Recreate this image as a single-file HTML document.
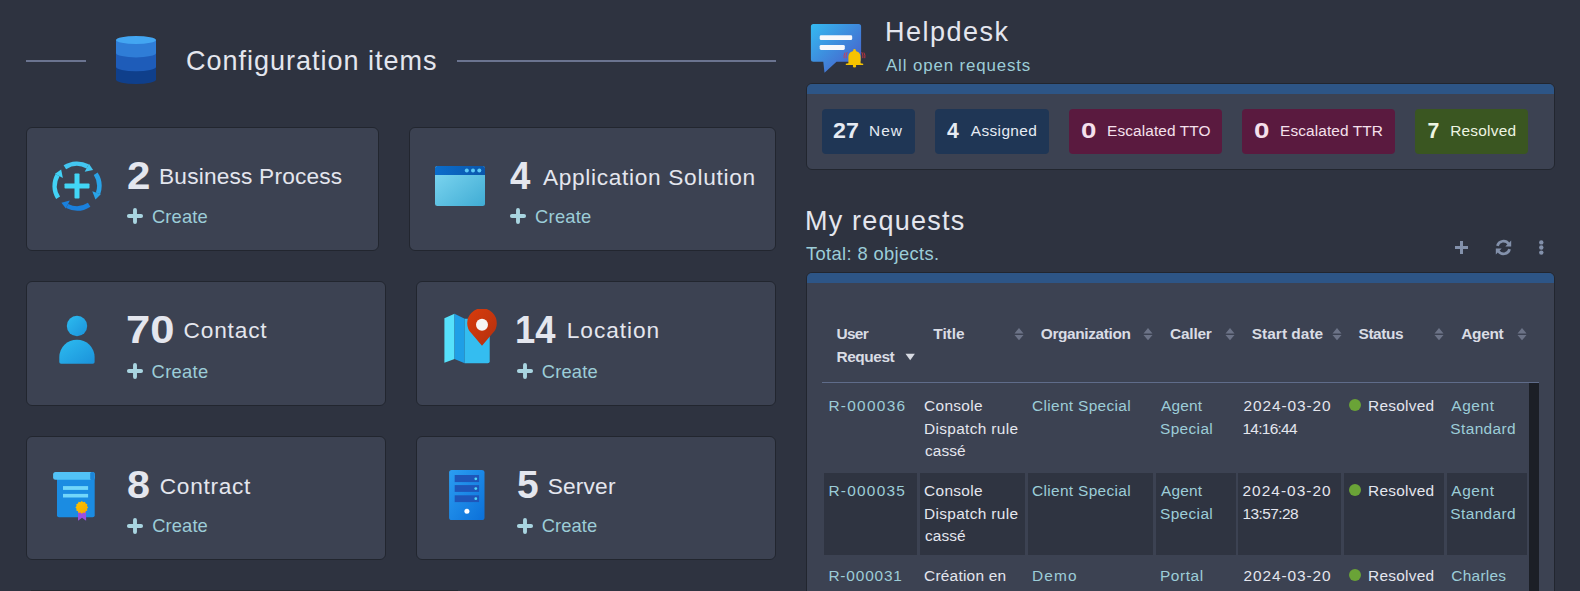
<!DOCTYPE html>
<html><head><meta charset="utf-8"><style>
html,body{margin:0;padding:0;width:1580px;height:591px;overflow:hidden;background:#2e3340;}
body{position:relative;font-family:"Liberation Sans",sans-serif;}
.t{position:absolute;white-space:nowrap;line-height:1;}
.hl{position:absolute;height:2px;background:#6b7490;}
.card{position:absolute;box-sizing:border-box;background:#3c4252;border:1px solid #22262f;border-radius:6px;}
.panel{position:absolute;box-sizing:border-box;background:#3c4252;border:1px solid #22262f;border-radius:6px;overflow:hidden;}
.strip{position:absolute;left:0;top:0;right:0;height:10px;background:#2d5586;}
.badge{position:absolute;top:109px;height:45px;border-radius:4px;}
.ic{position:absolute;}
</style></head><body>
<div class="hl" style="left:26px;top:60px;width:60px"></div>
<div class="hl" style="left:457px;top:60px;width:319px"></div>
<div class="card" style="left:26px;top:127px;width:353px;height:124px"></div>
<div class="card" style="left:409px;top:127px;width:367px;height:124px"></div>
<div class="card" style="left:26px;top:281px;width:360px;height:125px"></div>
<div class="card" style="left:416px;top:281px;width:360px;height:125px"></div>
<div class="card" style="left:26px;top:436px;width:360px;height:124px"></div>
<div class="card" style="left:416px;top:436px;width:360px;height:124px"></div>
<div class="panel" style="left:806px;top:83px;width:749px;height:87px"><div class="strip"></div></div>
<div class="badge" style="left:822px;width:93px;background:#1f3655"></div>
<div class="badge" style="left:935px;width:114px;background:#1f3655"></div>
<div class="badge" style="left:1069px;width:153px;background:#5a1a3f"></div>
<div class="badge" style="left:1242px;width:153px;background:#5a1a3f"></div>
<div class="badge" style="left:1415px;width:113px;background:#3a5621"></div>
<div class="panel" style="left:806px;top:272px;width:749px;height:340px"><div class="strip"></div></div>
<div style="position:absolute;left:822px;top:382px;width:717px;height:1px;background:#5f6c8a"></div>
<div style="position:absolute;left:1529px;top:383px;width:10px;height:208px;background:#1c1f26"></div>
<div style="position:absolute;left:31px;top:590px;width:427px;height:1px;background:#252931"></div>
<div style="position:absolute;left:824px;top:473px;width:93px;height:82px;background:#2f3441"></div>
<div style="position:absolute;left:920px;top:473px;width:105px;height:82px;background:#2f3441"></div>
<div style="position:absolute;left:1028px;top:473px;width:125px;height:82px;background:#2f3441"></div>
<div style="position:absolute;left:1156px;top:473px;width:80px;height:82px;background:#2f3441"></div>
<div style="position:absolute;left:1238px;top:473px;width:103px;height:82px;background:#2f3441"></div>
<div style="position:absolute;left:1344px;top:473px;width:100px;height:82px;background:#2f3441"></div>
<div style="position:absolute;left:1447px;top:473px;width:80px;height:82px;background:#2f3441"></div>
<div style="position:absolute;left:1349px;top:399px;width:12px;height:12px;border-radius:50%;background:#6aa337"></div>
<div style="position:absolute;left:1349px;top:484px;width:12px;height:12px;border-radius:50%;background:#6aa337"></div>
<div style="position:absolute;left:1349px;top:569px;width:12px;height:12px;border-radius:50%;background:#6aa337"></div>
<svg class="ic" style="left:116px;top:36px" width="40" height="48" viewBox="0 0 40 48">
<path d="M0,4 L0,43.6 A20,4.4 0 0 0 40,43.6 L40,4 Z" fill="#0f3f8b"/>
<path d="M0,4 L0,31 A20,4.2 0 0 0 40,31 L40,4 Z" fill="#1e5cb9"/>
<path d="M0,4 L0,17 A20,4.4 0 0 0 40,17 L40,4 Z" fill="#2f7dd7"/>
<ellipse cx="20" cy="4" rx="20" ry="4" fill="#43a6f2"/>
</svg>
<svg class="ic" style="left:50px;top:159px" width="54" height="54" viewBox="0 0 54 54"><path d="M14.85,8.30 A22.3,22.3 0 0 1 37.57,7.37" stroke="#43c6f1" stroke-width="4.6" fill="none"/><path d="M43.12,10.88 L38.95,4.81 L34.68,12.74 Z" fill="#43c6f1"/><path d="M45.70,14.85 A22.3,22.3 0 0 1 48.05,34.37" stroke="#2aa3e7" stroke-width="4.6" fill="none"/><path d="M45.45,40.40 L50.78,35.33 L42.29,32.35 Z" fill="#2aa3e7"/><path d="M39.15,45.70 A22.3,22.3 0 0 1 17.12,46.99" stroke="#1a80dd" stroke-width="4.6" fill="none"/><path d="M11.45,43.67 L15.83,49.59 L19.82,41.52 Z" fill="#1a80dd"/><path d="M8.09,38.82 A22.3,22.3 0 0 1 7.55,16.09" stroke="#42d2f6" stroke-width="4.6" fill="none"/><path d="M11.16,10.60 L5.02,14.67 L12.87,19.07 Z" fill="#42d2f6"/><rect x="14.5" y="24.5" width="25" height="5" rx="0.8" fill="#42d6f6"/><rect x="24.5" y="14.5" width="5" height="25" rx="0.8" fill="#42d6f6"/></svg>
<svg class="ic" style="left:435px;top:166px" width="50" height="40" viewBox="0 0 50 40">
<defs><linearGradient id="gw" x1="0" y1="0" x2="1" y2="1"><stop offset="0" stop-color="#80d8f2"/><stop offset="1" stop-color="#40acd4"/></linearGradient>
<linearGradient id="gb" x1="0" y1="0" x2="1" y2="0"><stop offset="0" stop-color="#0b6dcb"/><stop offset="1" stop-color="#0a56ab"/></linearGradient></defs>
<rect x="0" y="0" width="50" height="40" rx="2.5" fill="url(#gw)"/>
<path d="M0,9 L0,2.5 A2.5,2.5 0 0 1 2.5,0 L47.5,0 A2.5,2.5 0 0 1 50,2.5 L50,9 Z" fill="url(#gb)"/>
<circle cx="31.8" cy="4.4" r="2" fill="#5cc8f6"/><circle cx="38" cy="4.4" r="2" fill="#5cc8f6"/><circle cx="44.3" cy="4.4" r="2" fill="#5cc8f6"/>
</svg>
<svg class="ic" style="left:59px;top:315px" width="36" height="50" viewBox="0 0 36 50">
<defs><linearGradient id="gp" x1="0" y1="0" x2="1" y2="1"><stop offset="0" stop-color="#2dbcf0"/><stop offset="1" stop-color="#1b92da"/></linearGradient></defs>
<circle cx="18" cy="11" r="10.2" fill="url(#gp)"/>
<path d="M0.3,42 A17.65,17.2 0 0 1 35.6,42 L35.6,47 Q35.6,48.8 33.8,48.8 L2.1,48.8 Q0.3,48.8 0.3,47 Z" fill="url(#gp)"/>
</svg>
<svg class="ic" style="left:443px;top:309px" width="58" height="56" viewBox="0 0 58 56">
<defs><linearGradient id="gpin" x1="0" y1="0" x2="1" y2="1"><stop offset="0" stop-color="#d93c0c"/><stop offset="1" stop-color="#b3300f"/></linearGradient></defs>
<path d="M1.4,9.2 L11.5,4.8 L11.5,49.9 L1.4,53.7 Z" fill="#56e1fb"/>
<path d="M11.5,4.8 L21.7,9.7 L21.7,54.3 L11.5,49.9 Z" fill="#1f9fe6"/>
<path d="M21.7,9.7 L46.7,9.7 L46.7,52.3 Q46.7,54.3 44.7,54.3 L21.7,54.3 Z" fill="#34bdf0"/>
<path d="M39,36.7 L28.6,24.6 A14.8,14.8 0 1 1 49.4,24.6 Z" fill="url(#gpin)"/>
<circle cx="39" cy="15.8" r="6" fill="#f6f6f6"/>
</svg>
<svg class="ic" style="left:52px;top:471px" width="44" height="51" viewBox="0 0 44 51">
<defs><linearGradient id="gs" x1="0" y1="0" x2="1" y2="1"><stop offset="0" stop-color="#ffc400"/><stop offset="1" stop-color="#f2a900"/></linearGradient></defs>
<path d="M5,5 L42.7,5 L42.7,44.3 Q42.7,46.3 40.7,46.3 L7,46.3 Q5,46.3 5,44.3 Z" fill="#1b8ce2"/>
<rect x="1.1" y="1.1" width="41.6" height="7.6" rx="2.5" fill="#52c2f6"/>
<rect x="38.2" y="1.1" width="4.5" height="8" rx="1.5" fill="#1d86d8"/>
<rect x="11" y="15.1" width="25.1" height="3.8" fill="#72d6fa"/>
<rect x="11" y="22.9" width="25.1" height="3.6" fill="#72d6fa"/>
<path d="M26,36 L34.1,36 L34.1,49.8 L30,46.8 L26,49.8 Z" fill="#9a4fe0"/>
<polygon points="29.80,30.00 31.20,31.18 33.00,30.86 33.62,32.58 35.34,33.20 35.02,35.00 36.20,36.40 35.02,37.80 35.34,39.60 33.62,40.22 33.00,41.94 31.20,41.62 29.80,42.80 28.40,41.62 26.60,41.94 25.98,40.22 24.26,39.60 24.58,37.80 23.40,36.40 24.58,35.00 24.26,33.20 25.98,32.58 26.60,30.86 28.40,31.18" fill="url(#gs)"/></svg>
<svg class="ic" style="left:449px;top:470px" width="36" height="50" viewBox="0 0 36 50">
<defs><linearGradient id="gsv" x1="0" y1="0" x2="1" y2="1"><stop offset="0" stop-color="#2b9ef2"/><stop offset="1" stop-color="#0b70d9"/></linearGradient></defs>
<rect x="0.1" y="0" width="35.4" height="50" rx="2.6" fill="url(#gsv)"/>
<rect x="5.7" y="5" width="24.4" height="7.1" fill="#1e56b9"/>
<rect x="5.7" y="15.1" width="24.4" height="6.8" fill="#1e56b9"/>
<rect x="5.7" y="25.3" width="24.4" height="6.8" fill="#1e56b9"/>
<circle cx="26.8" cy="8.8" r="1.4" fill="#52d9f6"/><circle cx="26.8" cy="18.6" r="1.4" fill="#52d9f6"/><circle cx="26.8" cy="28.7" r="1.4" fill="#52d9f6"/>
<circle cx="17.9" cy="41.3" r="2.5" fill="#ffffff"/>
</svg>
<svg class="ic" style="left:810px;top:23px" width="56" height="52" viewBox="0 0 56 52">
<defs><linearGradient id="gc" x1="0" y1="0" x2="1" y2="1"><stop offset="0" stop-color="#34baf1"/><stop offset="1" stop-color="#4a55c6"/></linearGradient></defs>
<path d="M3.4,0.9 L48.6,0.9 A2.5,2.5 0 0 1 51.1,3.4 L51.1,36.2 A2.5,2.5 0 0 1 48.6,38.7 L26.5,38.7 L14.5,49.8 L13.3,38.7 L3.4,38.7 A2.5,2.5 0 0 1 0.9,36.2 L0.9,3.4 A2.5,2.5 0 0 1 3.4,0.9 Z" fill="url(#gc)"/>
<rect x="9.7" y="12.3" width="32.5" height="4.8" rx="1.4" fill="#f8f8fb"/>
<rect x="9.7" y="21.9" width="25.1" height="5.1" rx="1.4" fill="#f8f8fb"/>
<path d="M38.4,40.2 L38.4,34.2 C38.4,30.3 41,28.1 44.5,28.1 C48,28.1 50.6,30.3 50.6,34.2 L50.6,40.2 L53.2,40.8 L53.2,42.1 L35.8,42.1 L35.8,40.8 Z" fill="#f6c300"/>
<circle cx="44.5" cy="27.4" r="1.3" fill="#f6c300"/>
<circle cx="44.5" cy="42.9" r="1.7" fill="#f6c300"/>
<path d="M37.2,29.2 Q35.6,31.8 36.2,35.2 M35.1,29.6 Q33.6,32 34.2,35.2" stroke="#e3323f" stroke-width="0.8" fill="none"/>
<path d="M51.8,29.2 Q53.4,31.8 52.8,35.2 M53.9,29.6 Q55.4,32 54.8,35.2" stroke="#e3323f" stroke-width="0.8" fill="none"/>
</svg>
<svg class="ic" style="left:126px;top:207px" width="18" height="18" viewBox="0 0 18 18"><path d="M9,2.9 L9,15.1 M2.9,9 L15.1,9" stroke="#a9d5e1" stroke-width="3.9" stroke-linecap="round"/></svg>
<svg class="ic" style="left:509px;top:207px" width="18" height="18" viewBox="0 0 18 18"><path d="M9,2.9 L9,15.1 M2.9,9 L15.1,9" stroke="#a9d5e1" stroke-width="3.9" stroke-linecap="round"/></svg>
<svg class="ic" style="left:126px;top:362px" width="18" height="18" viewBox="0 0 18 18"><path d="M9,2.9 L9,15.1 M2.9,9 L15.1,9" stroke="#a9d5e1" stroke-width="3.9" stroke-linecap="round"/></svg>
<svg class="ic" style="left:516px;top:362px" width="18" height="18" viewBox="0 0 18 18"><path d="M9,2.9 L9,15.1 M2.9,9 L15.1,9" stroke="#a9d5e1" stroke-width="3.9" stroke-linecap="round"/></svg>
<svg class="ic" style="left:126px;top:517px" width="18" height="18" viewBox="0 0 18 18"><path d="M9,2.9 L9,15.1 M2.9,9 L15.1,9" stroke="#a9d5e1" stroke-width="3.9" stroke-linecap="round"/></svg>
<svg class="ic" style="left:516px;top:517px" width="18" height="18" viewBox="0 0 18 18"><path d="M9,2.9 L9,15.1 M2.9,9 L15.1,9" stroke="#a9d5e1" stroke-width="3.9" stroke-linecap="round"/></svg>
<svg class="ic" style="left:1453px;top:239px" width="17" height="17" viewBox="0 0 17 17"><path d="M8.5,2 L8.5,15 M2,8.5 L15,8.5" stroke="#8391ab" stroke-width="3" /></svg>
<svg class="ic" style="left:1494px;top:238px" width="19" height="19" viewBox="0 0 19 19"><path d="M3.4,7.9 A6.3,6.3 0 0 1 14.7,5.9" stroke="#8391ab" stroke-width="2.7" fill="none"/>
<path d="M17.2,2.6 L17.2,8.5 L11.3,8.5 Z" fill="#8391ab"/>
<path d="M15.6,11.1 A6.3,6.3 0 0 1 4.3,13.1" stroke="#8391ab" stroke-width="2.7" fill="none"/>
<path d="M1.8,16.4 L1.8,10.5 L7.7,10.5 Z" fill="#8391ab"/></svg>
<svg class="ic" style="left:1537px;top:239px" width="9" height="17" viewBox="0 0 9 17"><circle cx="4.3" cy="3.4" r="2.2" fill="#8391ab"/><circle cx="4.3" cy="8.5" r="2.2" fill="#8391ab"/><circle cx="4.3" cy="13.6" r="2.2" fill="#8391ab"/></svg>
<svg class="ic" style="left:1013px;top:326px" width="12" height="16" viewBox="0 0 12 16"><path d="M1.5,7.4 L6,1.9 L10.5,7.4 Z M1.5,9.1 L10.5,9.1 L6,14.2 Z" fill="#6c7387"/></svg>
<svg class="ic" style="left:1142px;top:326px" width="12" height="16" viewBox="0 0 12 16"><path d="M1.5,7.4 L6,1.9 L10.5,7.4 Z M1.5,9.1 L10.5,9.1 L6,14.2 Z" fill="#6c7387"/></svg>
<svg class="ic" style="left:1224px;top:326px" width="12" height="16" viewBox="0 0 12 16"><path d="M1.5,7.4 L6,1.9 L10.5,7.4 Z M1.5,9.1 L10.5,9.1 L6,14.2 Z" fill="#6c7387"/></svg>
<svg class="ic" style="left:1331px;top:326px" width="12" height="16" viewBox="0 0 12 16"><path d="M1.5,7.4 L6,1.9 L10.5,7.4 Z M1.5,9.1 L10.5,9.1 L6,14.2 Z" fill="#6c7387"/></svg>
<svg class="ic" style="left:1433px;top:326px" width="12" height="16" viewBox="0 0 12 16"><path d="M1.5,7.4 L6,1.9 L10.5,7.4 Z M1.5,9.1 L10.5,9.1 L6,14.2 Z" fill="#6c7387"/></svg>
<svg class="ic" style="left:1516px;top:326px" width="12" height="16" viewBox="0 0 12 16"><path d="M1.5,7.4 L6,1.9 L10.5,7.4 Z M1.5,9.1 L10.5,9.1 L6,14.2 Z" fill="#6c7387"/></svg>
<svg class="ic" style="left:904px;top:352px" width="12" height="10" viewBox="0 0 12 10"><path d="M1.5,1.7 L10.9,1.7 L6.2,8.2 Z" fill="#d8dbe3"/></svg>
<div id="t_ci" class="t" style="left:185.90px;top:47.83px;font-size:27.03px;font-weight:400;color:#e4e6ee;letter-spacing:0.989px">Configuration items</div>
<div id="a_n" class="t" style="left:127.00px;top:157.46px;font-size:38.04px;font-weight:700;color:#e4e6ee;letter-spacing:0.000px;transform:scaleX(1.1053);transform-origin:0 0">2</div>
<div id="a_l" class="t" style="left:159.00px;top:165.02px;font-size:22.68px;font-weight:400;color:#e4e6ee;letter-spacing:0.200px">Business Process</div>
<div id="a_c" class="t" style="left:151.90px;top:208.02px;font-size:18.33px;font-weight:400;color:#9ccdd8;letter-spacing:0.160px">Create</div>
<div id="b_n" class="t" style="left:510.20px;top:157.46px;font-size:38.04px;font-weight:700;color:#e4e6ee;letter-spacing:0.000px;transform:scaleX(0.9632);transform-origin:0 0">4</div>
<div id="b_l" class="t" style="left:542.90px;top:166.22px;font-size:22.68px;font-weight:400;color:#e4e6ee;letter-spacing:0.684px">Application Solution</div>
<div id="b_c" class="t" style="left:535.10px;top:208.42px;font-size:18.33px;font-weight:400;color:#9ccdd8;letter-spacing:0.240px">Create</div>
<div id="c_n" class="t" style="left:125.90px;top:311.46px;font-size:38.04px;font-weight:700;color:#e4e6ee;letter-spacing:0.000px;transform:scaleX(1.1459);transform-origin:0 0">70</div>
<div id="c_l" class="t" style="left:183.50px;top:319.02px;font-size:22.68px;font-weight:400;color:#e4e6ee;letter-spacing:0.833px">Contact</div>
<div id="c_c" class="t" style="left:151.60px;top:363.42px;font-size:18.33px;font-weight:400;color:#9ccdd8;letter-spacing:0.320px">Create</div>
<div id="d_n" class="t" style="left:515.10px;top:310.76px;font-size:38.04px;font-weight:700;color:#e4e6ee;letter-spacing:0.000px;transform:scaleX(0.9566);transform-origin:0 0">14</div>
<div id="d_l" class="t" style="left:566.80px;top:319.42px;font-size:22.68px;font-weight:400;color:#e4e6ee;letter-spacing:0.943px">Location</div>
<div id="d_c" class="t" style="left:541.80px;top:363.12px;font-size:18.33px;font-weight:400;color:#9ccdd8;letter-spacing:0.160px">Create</div>
<div id="e_n" class="t" style="left:126.90px;top:465.56px;font-size:38.04px;font-weight:700;color:#e4e6ee;letter-spacing:0.000px;transform:scaleX(1.0855);transform-origin:0 0">8</div>
<div id="e_l" class="t" style="left:159.80px;top:475.32px;font-size:22.68px;font-weight:400;color:#e4e6ee;letter-spacing:0.686px">Contract</div>
<div id="e_c" class="t" style="left:152.20px;top:516.52px;font-size:18.33px;font-weight:400;color:#9ccdd8;letter-spacing:0.120px">Create</div>
<div id="f_n" class="t" style="left:517.00px;top:465.56px;font-size:38.04px;font-weight:700;color:#e4e6ee;letter-spacing:0.000px;transform:scaleX(1.0227);transform-origin:0 0">5</div>
<div id="f_l" class="t" style="left:547.70px;top:475.32px;font-size:22.68px;font-weight:400;color:#e4e6ee;letter-spacing:0.200px">Server</div>
<div id="f_c" class="t" style="left:541.80px;top:516.52px;font-size:18.33px;font-weight:400;color:#9ccdd8;letter-spacing:0.080px">Create</div>
<div id="h_t" class="t" style="left:885.10px;top:18.83px;font-size:27.03px;font-weight:400;color:#e4e6ee;letter-spacing:1.457px">Helpdesk</div>
<div id="h_s" class="t" style="left:886.00px;top:58.05px;font-size:16.88px;font-weight:400;color:#9ccdd8;letter-spacing:0.875px">All open requests</div>
<div id="bd1n" class="t" style="left:833.00px;top:119.75px;font-size:21.23px;font-weight:700;color:#e6ebf3;letter-spacing:0.000px;transform:scaleX(1.0924);transform-origin:0 0">27</div>
<div id="bd1l" class="t" style="left:869.00px;top:123.08px;font-size:15.43px;font-weight:400;color:#e6ebf3;letter-spacing:1.000px">New</div>
<div id="bd2n" class="t" style="left:947.10px;top:119.75px;font-size:21.23px;font-weight:700;color:#e6ebf3;letter-spacing:0.000px">4</div>
<div id="bd2l" class="t" style="left:970.80px;top:123.08px;font-size:15.43px;font-weight:400;color:#e6ebf3;letter-spacing:0.371px">Assigned</div>
<div id="bd3n" class="t" style="left:1080.80px;top:119.75px;font-size:21.23px;font-weight:700;color:#f5e0ec;letter-spacing:0.000px;transform:scaleX(1.3029);transform-origin:0 0">0</div>
<div id="bd3l" class="t" style="left:1107.10px;top:123.08px;font-size:15.43px;font-weight:400;color:#f5e0ec;letter-spacing:0.100px">Escalated TTO</div>
<div id="bd4n" class="t" style="left:1253.80px;top:119.75px;font-size:21.23px;font-weight:700;color:#f5e0ec;letter-spacing:0.000px;transform:scaleX(1.3029);transform-origin:0 0">0</div>
<div id="bd4l" class="t" style="left:1280.10px;top:123.08px;font-size:15.43px;font-weight:400;color:#f5e0ec;letter-spacing:0.100px">Escalated TTR</div>
<div id="bd5n" class="t" style="left:1427.60px;top:119.75px;font-size:21.23px;font-weight:700;color:#eef5e2;letter-spacing:0.000px">7</div>
<div id="bd5l" class="t" style="left:1450.20px;top:123.08px;font-size:15.43px;font-weight:400;color:#eef5e2;letter-spacing:0.229px">Resolved</div>
<div id="mr_t" class="t" style="left:805.00px;top:207.83px;font-size:27.03px;font-weight:400;color:#e4e6ee;letter-spacing:1.200px">My requests</div>
<div id="mr_s" class="t" style="left:806.00px;top:245.22px;font-size:18.33px;font-weight:400;color:#9ccdd8;letter-spacing:0.362px">Total: 8 objects.</div>
<div id="th1a" class="t" style="left:836.60px;top:325.78px;font-size:15.43px;font-weight:700;color:#d9dce4;letter-spacing:-0.733px">User</div>
<div id="th1b" class="t" style="left:836.60px;top:349.38px;font-size:15.43px;font-weight:700;color:#d9dce4;letter-spacing:-0.467px">Request</div>
<div id="th2" class="t" style="left:933.30px;top:325.78px;font-size:15.43px;font-weight:700;color:#d9dce4;letter-spacing:-0.050px">Title</div>
<div id="th3" class="t" style="left:1040.80px;top:325.78px;font-size:15.43px;font-weight:700;color:#d9dce4;letter-spacing:-0.382px">Organization</div>
<div id="th4" class="t" style="left:1170.00px;top:325.78px;font-size:15.43px;font-weight:700;color:#d9dce4;letter-spacing:-0.200px">Caller</div>
<div id="th5" class="t" style="left:1251.80px;top:325.78px;font-size:15.43px;font-weight:700;color:#d9dce4;letter-spacing:0.022px">Start date</div>
<div id="th6" class="t" style="left:1358.50px;top:325.78px;font-size:15.43px;font-weight:700;color:#d9dce4;letter-spacing:-0.400px">Status</div>
<div id="th7" class="t" style="left:1461.30px;top:325.78px;font-size:15.43px;font-weight:700;color:#d9dce4;letter-spacing:-0.350px">Agent</div>
<div id="r0c0l0" class="t" style="left:828.40px;top:397.68px;font-size:15.43px;font-weight:400;color:#9ccdd8;letter-spacing:1.286px">R-000036</div>
<div id="r0c1l0" class="t" style="left:924.00px;top:397.68px;font-size:15.43px;font-weight:400;color:#e4e6ee;letter-spacing:0.333px">Console</div>
<div id="r0c1l1" class="t" style="left:924.00px;top:421.38px;font-size:15.43px;font-weight:400;color:#e4e6ee;letter-spacing:0.333px">Dispatch rule</div>
<div id="r0c1l2" class="t" style="left:925.00px;top:443.08px;font-size:15.43px;font-weight:400;color:#e4e6ee;letter-spacing:0.050px">cassé</div>
<div id="r0c2l0" class="t" style="left:1032.00px;top:397.68px;font-size:15.43px;font-weight:400;color:#9ccdd8;letter-spacing:0.338px">Client Special</div>
<div id="r0c3l0" class="t" style="left:1161.00px;top:397.68px;font-size:15.43px;font-weight:400;color:#9ccdd8;letter-spacing:0.200px">Agent</div>
<div id="r0c3l1" class="t" style="left:1160.00px;top:421.38px;font-size:15.43px;font-weight:400;color:#9ccdd8;letter-spacing:0.367px">Special</div>
<div id="r0c4l0" class="t" style="left:1243.50px;top:397.68px;font-size:15.43px;font-weight:400;color:#e4e6ee;letter-spacing:0.911px">2024-03-20</div>
<div id="r0c4l1" class="t" style="left:1242.50px;top:421.38px;font-size:15.43px;font-weight:400;color:#e4e6ee;letter-spacing:-0.714px">14:16:44</div>
<div id="r0c5l0" class="t" style="left:1368.10px;top:397.68px;font-size:15.43px;font-weight:400;color:#e4e6ee;letter-spacing:0.257px">Resolved</div>
<div id="r0c6l0" class="t" style="left:1451.30px;top:397.68px;font-size:15.43px;font-weight:400;color:#9ccdd8;letter-spacing:0.600px">Agent</div>
<div id="r0c6l1" class="t" style="left:1450.30px;top:421.38px;font-size:15.43px;font-weight:400;color:#9ccdd8;letter-spacing:0.400px">Standard</div>
<div id="r1c0l0" class="t" style="left:828.40px;top:482.68px;font-size:15.43px;font-weight:400;color:#9ccdd8;letter-spacing:1.257px">R-000035</div>
<div id="r1c1l0" class="t" style="left:924.00px;top:482.68px;font-size:15.43px;font-weight:400;color:#e4e6ee;letter-spacing:0.333px">Console</div>
<div id="r1c1l1" class="t" style="left:924.00px;top:506.38px;font-size:15.43px;font-weight:400;color:#e4e6ee;letter-spacing:0.333px">Dispatch rule</div>
<div id="r1c1l2" class="t" style="left:925.00px;top:528.08px;font-size:15.43px;font-weight:400;color:#e4e6ee;letter-spacing:0.050px">cassé</div>
<div id="r1c2l0" class="t" style="left:1032.00px;top:482.68px;font-size:15.43px;font-weight:400;color:#9ccdd8;letter-spacing:0.338px">Client Special</div>
<div id="r1c3l0" class="t" style="left:1161.00px;top:482.68px;font-size:15.43px;font-weight:400;color:#9ccdd8;letter-spacing:0.200px">Agent</div>
<div id="r1c3l1" class="t" style="left:1160.00px;top:506.38px;font-size:15.43px;font-weight:400;color:#9ccdd8;letter-spacing:0.367px">Special</div>
<div id="r1c4l0" class="t" style="left:1242.50px;top:482.68px;font-size:15.43px;font-weight:400;color:#e4e6ee;letter-spacing:1.022px">2024-03-20</div>
<div id="r1c4l1" class="t" style="left:1242.50px;top:506.38px;font-size:15.43px;font-weight:400;color:#e4e6ee;letter-spacing:-0.571px">13:57:28</div>
<div id="r1c5l0" class="t" style="left:1368.10px;top:482.68px;font-size:15.43px;font-weight:400;color:#e4e6ee;letter-spacing:0.257px">Resolved</div>
<div id="r1c6l0" class="t" style="left:1451.30px;top:482.68px;font-size:15.43px;font-weight:400;color:#9ccdd8;letter-spacing:0.600px">Agent</div>
<div id="r1c6l1" class="t" style="left:1450.30px;top:506.38px;font-size:15.43px;font-weight:400;color:#9ccdd8;letter-spacing:0.400px">Standard</div>
<div id="r2c0l0" class="t" style="left:828.40px;top:567.68px;font-size:15.43px;font-weight:400;color:#9ccdd8;letter-spacing:0.829px">R-000031</div>
<div id="r2c1l0" class="t" style="left:924.00px;top:567.68px;font-size:15.43px;font-weight:400;color:#e4e6ee;letter-spacing:0.240px">Création en</div>
<div id="r2c2l0" class="t" style="left:1032.00px;top:567.68px;font-size:15.43px;font-weight:400;color:#9ccdd8;letter-spacing:1.133px">Demo</div>
<div id="r2c3l0" class="t" style="left:1160.00px;top:567.68px;font-size:15.43px;font-weight:400;color:#9ccdd8;letter-spacing:0.560px">Portal</div>
<div id="r2c4l0" class="t" style="left:1243.50px;top:567.68px;font-size:15.43px;font-weight:400;color:#e4e6ee;letter-spacing:0.911px">2024-03-20</div>
<div id="r2c5l0" class="t" style="left:1368.10px;top:567.68px;font-size:15.43px;font-weight:400;color:#e4e6ee;letter-spacing:0.257px">Resolved</div>
<div id="r2c6l0" class="t" style="left:1451.30px;top:567.68px;font-size:15.43px;font-weight:400;color:#9ccdd8;letter-spacing:0.267px">Charles</div>
</body></html>
